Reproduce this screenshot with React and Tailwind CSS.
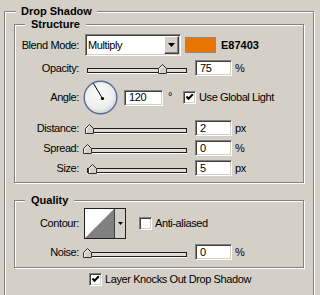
import React from 'react';

// classic win32 sunken edge (text boxes, checkboxes, combo)
const sunken =
  'border border-t-[#808080] border-l-[#808080] border-b-white border-r-white shadow-[inset_1px_1px_0_#404040,inset_-1px_-1px_0_#d4d0c8]';
const group =
  'w-[290px] border border-[#808080] shadow-[inset_1px_1px_0_#fff,1px_1px_0_#fff]';
const bold = 'font-bold tracking-normal';

function Check({ checked }) {
  return (
    <span className={`flex h-[13px] w-[13px] shrink-0 items-center justify-center bg-white ${sunken}`}>
      {checked && (
        <svg width="9" height="9" viewBox="0 0 9 9">
          <path d="M1.5 3.5 L3.5 5.8 L7.8 1.2" fill="none" stroke="#000" strokeWidth="2" />
        </svg>
      )}
    </span>
  );
}

function Field({ value, className }) {
  return (
    <div className={`flex h-[16px] items-center bg-white pl-[4px] ${sunken} ${className}`}>
      {value}
    </div>
  );
}

function Slider({ value }) {
  return (
    <div className="relative ml-[8px] h-[16px] w-[100px]">
      <div className="mt-[8px] h-[5px] border border-[#1e1e1e] bg-[#dedbd4] shadow-[0_1px_0_#fff]" />
      <svg
        className="absolute top-[4px]"
        style={{ left: value - 4 }}
        width="9"
        height="10"
        viewBox="0 0 9 10"
      >
        <polygon points="0.5,9.5 0.5,4.5 4.5,0.5 8.5,4.5 8.5,9.5" fill="#d4d0c8" stroke="#303030" />
        <polyline points="1.5,9 1.5,4.9 4.5,1.9" fill="none" stroke="#fff" />
      </svg>
    </div>
  );
}

function Label({ children }) {
  return <span className="w-[64px] shrink-0 text-right">{children}</span>;
}

function SliderRow({ label, value, unit, className = 'mt-[4px]' }) {
  return (
    <div className={`flex h-[16px] items-center ${className}`}>
      <Label>{label}</Label>
      <Slider value={value} />
      <Field value={value} className="ml-[8px] w-[37px]" />
      <span className="ml-[3px]">{unit}</span>
    </div>
  );
}

export default function App() {
  return (
    <div className="h-[295px] w-[320px] overflow-hidden bg-[#d4d0c8] pl-[4px] pt-[5px] font-['Liberation_Sans',Arial,sans-serif] text-[11px] leading-[13px] tracking-[-0.4px] text-black">
      <fieldset className="min-h-[310px] w-[310px] border border-[#808080] px-[9px] shadow-[inset_1px_1px_0_#fff,1px_1px_0_#fff]">
        <legend className={`ml-[2px] bg-[#d4d0c8] px-[5px] ${bold}`}>Drop Shadow</legend>

        {/* Structure */}
        <fieldset className={`${group} pb-[6px]`}>
          <legend className={`ml-[10px] bg-[#d4d0c8] px-[6px] ${bold}`}>Structure</legend>

          <div className="mt-[3px] flex h-[22px] items-center">
            <Label>Blend Mode:</Label>
            <div className={`ml-[6px] flex h-[22px] w-[96px] items-center justify-between bg-white ${sunken}`}>
              <span className="pl-[2px]">Multiply</span>
              <span className="mr-[1px] flex h-[18px] w-[15px] items-center justify-center border border-t-white border-l-white border-b-[#404040] border-r-[#404040] bg-[#d4d0c8] shadow-[inset_-1px_-1px_0_#808080]">
                <svg width="7" height="4" viewBox="0 0 7 4">
                  <polygon points="0,0 7,0 3.5,4" fill="#000" />
                </svg>
              </span>
            </div>
            <span className="ml-[4px] h-[16px] w-[31px] border border-[#8a8a8a] bg-[#e87403]" />
            <span className={`ml-[5px] ${bold}`}>E87403</span>
          </div>

          <SliderRow label="Opacity:" value={75} unit="%" />

          <div className="mt-[4px] flex h-[35px] items-center">
            <Label>Angle:</Label>
            <svg className="ml-[4px]" width="35" height="35" viewBox="0 0 35 35">
              <defs>
                <radialGradient id="dial" cx="0.45" cy="0.4" r="0.6">
                  <stop offset="0" stopColor="#fafafa" />
                  <stop offset="0.75" stopColor="#eeeeec" />
                  <stop offset="1" stopColor="#cfd2da" />
                </radialGradient>
              </defs>
              <circle cx="17.5" cy="17.5" r="16.3" fill="url(#dial)" stroke="#5a6c98" strokeWidth="1.4" />
              <line x1="19.5" y1="18.5" x2="10.5" y2="3.5" stroke="#000" strokeWidth="1" />
              <circle cx="19.5" cy="18.5" r="1.6" fill="#000" />
            </svg>
            <Field value="120" className="ml-[6px] w-[39px]" />
            <span className="ml-[5px] mt-[10px] self-start">°</span>
            <span className="ml-[11px] flex items-center">
              <Check checked />
              <span className="ml-[3px]">Use Global Light</span>
            </span>
          </div>

          <SliderRow label="Distance:" value={2} unit="px" className="mt-[5px]" />
          <SliderRow label="Spread:" value={0} unit="%" />
          <SliderRow label="Size:" value={5} unit="px" />
        </fieldset>

        {/* Quality */}
        <fieldset className={`${group} mt-[11px] pb-[7px]`}>
          <legend className={`ml-[10px] bg-[#d4d0c8] px-[6px] ${bold}`}>Quality</legend>

          <div className="mt-[1px] flex h-[31px] items-center">
            <Label>Contour:</Label>
            <div className="ml-[5px] flex h-[31px] w-[42px] border border-[#202020] shadow-[inset_1px_1px_0_#808080]">
              <svg width="29" height="29" viewBox="0 0 29 29" className="bg-white">
                <polygon points="0,29 29,0 29,29" fill="#808080" />
              </svg>
              <span className="flex flex-1 items-center justify-center border-l border-[#404040] bg-[#d4d0c8]">
                <svg width="5" height="3" viewBox="0 0 5 3">
                  <polygon points="0,0 5,0 2.5,3" fill="#000" />
                </svg>
              </span>
            </div>
            <span className="ml-[13px] flex items-center">
              <Check />
              <span className="ml-[3px]">Anti-aliased</span>
            </span>
          </div>

          <SliderRow label="Noise:" value={0} unit="%" className="mt-[5px]" />
        </fieldset>

        <div className="ml-[75px] mt-[5px] flex h-[13px] items-center">
          <Check checked />
          <span className="ml-[3px]">Layer Knocks Out Drop Shadow</span>
        </div>
      </fieldset>
    </div>
  );
}
